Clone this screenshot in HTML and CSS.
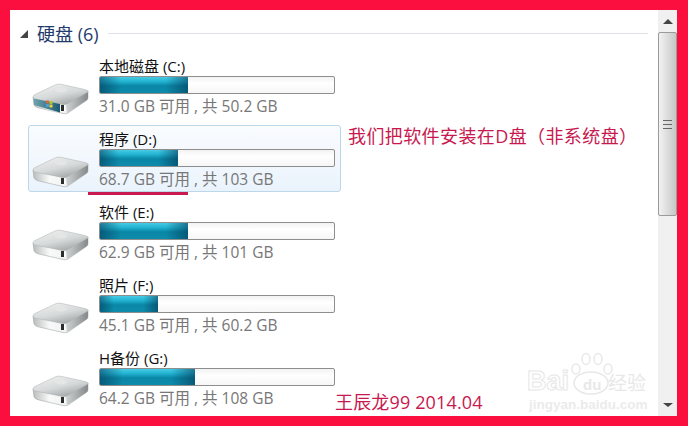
FILE: index.html
```html
<!DOCTYPE html>
<html lang="zh-CN">
<head>
  <meta charset="UTF-8" />
  <title>硬盘</title>
  <link rel="stylesheet" href="styles.css">
</head>
<body>
  <svg class="defs" width="0" height="0">
    <defs>
      <linearGradient id="top" x1="0" y1="0" x2="0.6" y2="1">
        <stop offset="0" stop-color="#f3f4f4"/>
        <stop offset="0.6" stop-color="#d6d9d9"/>
        <stop offset="1" stop-color="#a6aaaa"/>
      </linearGradient>
      <linearGradient id="front" x1="0" y1="0" x2="1" y2="0">
        <stop offset="0" stop-color="#b9bcbc"/>
        <stop offset="0.3" stop-color="#f8f9f9"/>
        <stop offset="1" stop-color="#e6e8e8"/>
      </linearGradient>
      <linearGradient id="flank" x1="0" y1="0" x2="1" y2="0">
        <stop offset="0" stop-color="#cfd2d2"/>
        <stop offset="1" stop-color="#858989"/>
      </linearGradient>
      <linearGradient id="glass" x1="0" y1="0" x2="1" y2="0">
        <stop offset="0" stop-color="#6fa3ad"/>
        <stop offset="1" stop-color="#1c5b76"/>
      </linearGradient>
      <symbol id="drive" viewBox="0 0 58 34">
        <path d="M2 23 Q3 25 6 25.800 L31 31.500 Q34 32.300 36 31 L55 18 Q56 17 56 15 L56 9 L33 23 L1 15 Z" fill="url(#front)" stroke="#999d9d" stroke-width="0.500" stroke-linejoin="round"/>
        <path d="M35 31.500 L55 18 Q56 17 56 15 L56 9 L34 23 Z" fill="url(#flank)"/>
        <path d="M1 15 Q1 13 4 12 L23 3 Q26 1.500 29 2.300 L53 7.500 Q57 8.500 56 10 L36 21.500 Q33 23 30 22.300 L3 17 Q1 16.500 1 15 Z" fill="url(#top)" stroke="#adb1b1" stroke-width="0.500"/>
        <ellipse cx="29" cy="8" rx="6" ry="2.500" fill="#e4e6e6"/>
        <rect x="29" y="23" width="3" height="6" fill="#2c2c2c"/>
        <rect x="32" y="23" width="1.500" height="6" fill="#fff"/>
      </symbol>
      <symbol id="drive-sys" viewBox="0 0 58 34">
        <use href="#drive"/>
        <path d="M1.500 16.500 L2 23 L28 30.500 L28 22 Z" fill="url(#glass)"/>
        <rect x="14" y="18.500" width="3" height="3" fill="#d86a3a"/>
        <rect x="17.500" y="19" width="3" height="3" fill="#a6c83c"/>
        <rect x="14" y="22" width="3" height="3" fill="#4d9fd8"/>
        <rect x="17.500" y="22.500" width="3" height="3" fill="#f0cd32"/>
      </symbol>
    </defs>
  </svg>

  <div class="frame">
    <div class="pane">
      <div class="group-head">
        <span class="arrow"></span>
        <span class="group-title">硬盘 (6)</span>
        <span class="group-line"></span>
      </div>

      <div class="drive">
        <svg class="drive-icon"><use href="#drive-sys"/></svg>
        <div class="drive-info">
          <div class="drive-name">本地磁盘 (C:)</div>
          <div class="bar"><div class="bar-fill" style="width:89px"></div></div>
          <div class="drive-size">31.0 GB 可用 , 共 50.2 GB</div>
        </div>
      </div>

      <div class="drive selected">
        <svg class="drive-icon"><use href="#drive"/></svg>
        <div class="drive-info">
          <div class="drive-name">程序 (D:)</div>
          <div class="bar"><div class="bar-fill" style="width:79px"></div></div>
          <div class="drive-size">68.7 GB 可用 , 共 103 GB</div>
        </div>
        <span class="underline"></span>
        <span class="note">我们把软件安装在D盘（非系统盘）</span>
      </div>

      <div class="drive">
        <svg class="drive-icon"><use href="#drive"/></svg>
        <div class="drive-info">
          <div class="drive-name">软件 (E:)</div>
          <div class="bar"><div class="bar-fill" style="width:89px"></div></div>
          <div class="drive-size">62.9 GB 可用 , 共 101 GB</div>
        </div>
      </div>

      <div class="drive">
        <svg class="drive-icon"><use href="#drive"/></svg>
        <div class="drive-info">
          <div class="drive-name">照片 (F:)</div>
          <div class="bar"><div class="bar-fill" style="width:59px"></div></div>
          <div class="drive-size">45.1 GB 可用 , 共 60.2 GB</div>
        </div>
      </div>

      <div class="drive">
        <svg class="drive-icon"><use href="#drive"/></svg>
        <div class="drive-info">
          <div class="drive-name">H备份 (G:)</div>
          <div class="bar"><div class="bar-fill" style="width:96px"></div></div>
          <div class="drive-size">64.2 GB 可用 , 共 108 GB</div>
        </div>
      </div>

      <span class="signature">王辰龙99 2014.04</span>

      <div class="watermark">
        <svg class="paw" width="46" height="44" viewBox="0 0 46 44">
          <g fill="none" stroke="#e8e8e8" stroke-width="1.500">
            <ellipse cx="7" cy="17" rx="4" ry="5"/>
            <ellipse cx="17" cy="7" rx="4" ry="5.500"/>
            <ellipse cx="29" cy="7" rx="4" ry="5.500"/>
            <ellipse cx="39" cy="17" rx="4" ry="5"/>
            <ellipse cx="22" cy="31" rx="17" ry="11"/>
          </g>
        </svg>
        <span class="wm-bai">Bai</span>
        <span class="wm-du">du</span>
        <span class="wm-jy">经验</span>
        <span class="wm-url">jingyan.baidu.com</span>
      </div>
    </div>

    <div class="scrollbar">
      <div class="scroll-btn"><span class="tri-up"></span></div>
      <div class="thumb">
        <span class="grip"></span>
      </div>
      <div class="scroll-track"></div>
      <div class="scroll-btn"><span class="tri-down"></span></div>
    </div>
  </div>
</body>
</html>
```

FILE: styles.css
```css
* {
  box-sizing: border-box;
}

html, body {
  height: 100%;
}

body {
  margin: 0;
  background: #fa0f3f;
  font-family: "Open Sans", "Noto Sans CJK SC", sans-serif;
  overflow: hidden;
}

.defs {
  position: absolute;
}

.frame {
  display: flex;
  width: 667px;
  height: 406px;
  margin: 10px 0 0 10px;
  background: #fff;
}

.pane {
  position: relative;
  flex: 1;
  overflow: hidden;
  padding: 10px 0 0 10px;
}

/* group header */
.group-head {
  display: flex;
  align-items: center;
  gap: 9px;
  height: 26px;
  margin-bottom: 6px;
  padding-right: 10px;
}

.arrow {
  width: 0;
  height: 0;
  margin-top: 1px;
  border-left: 8px solid transparent;
  border-bottom: 8px solid #444;
}

.group-title {
  font-size: 18px;
  color: #1f3a6d;
}

.group-line {
  flex: 1;
  height: 1px;
  background: #dfe3e8;
}

/* drive rows */
.drive {
  position: relative;
  display: flex;
  width: 313px;
  height: 67px;
  margin: 0 0 6px 8px;
  padding: 0 0 0 3px;
  border: 1px solid transparent;
  border-radius: 3px;
}

.drive.selected {
  border-color: #bcd6ea;
  background: linear-gradient(#fafcfe, #eaf3fc);
}

.drive-icon {
  flex: none;
  width: 58px;
  height: 34px;
  margin-top: 29px;
}

.drive-info {
  margin-left: 9px;
  padding-top: 3px;
}

.drive-name {
  height: 20px;
  font-size: 15px;
  line-height: 20px;
  color: #111;
  white-space: nowrap;
}

.bar {
  width: 236px;
  height: 18px;
  border: 1px solid #8e8e8e;
  border-radius: 2px;
  background: linear-gradient(#f2f2f2, #fff 40%, #f6f6f6);
  overflow: hidden;
}

.bar-fill {
  height: 100%;
  margin: -1px 0 0 -1px;
  box-sizing: content-box;
  padding-bottom: 2px;
  background:
    linear-gradient(to right, rgba(3, 50, 80, 0.55), rgba(3, 50, 80, 0) 25%, rgba(3, 50, 80, 0) 75%, rgba(3, 50, 80, 0.55)),
    linear-gradient(#4fd0e8, #22b4d2 30%, #0a86a6 55%, #0f8cab 100%);
}

.drive-size {
  margin-top: 2px;
  font-size: 15.500px;
  line-height: 21px;
  color: #777;
  white-space: nowrap;
}

/* red annotations */
.underline {
  position: absolute;
  left: 59px;
  bottom: -4px;
  width: 100px;
  height: 3px;
  background: #c81a50;
}

.note {
  position: absolute;
  left: 319px;
  top: -1px;
  font-size: 18px;
  line-height: 23px;
  letter-spacing: 0.400px;
  color: #c8194f;
  white-space: nowrap;
}

.signature {
  position: absolute;
  left: 325px;
  top: 381px;
  font-size: 18px;
  line-height: 22px;
  letter-spacing: 0.150px;
  color: #c8194f;
  white-space: nowrap;
}

/* baidu watermark */
.watermark {
  position: absolute;
  left: 517px;
  top: 342px;
  width: 125px;
  height: 64px;
  color: transparent;
}

.paw {
  position: absolute;
  left: 42px;
  top: 0;
}

.wm-bai {
  position: absolute;
  left: 0;
  top: 14px;
  font: bold 27px "Liberation Sans", sans-serif;
  -webkit-text-stroke: 1px #e6e6e6;
}

.wm-du {
  position: absolute;
  left: 56px;
  top: 24px;
  font: bold 15px "Liberation Sans", sans-serif;
  color: #e8e8e8;
}

.wm-jy {
  position: absolute;
  left: 81px;
  top: 16px;
  font: 19px "Noto Sans CJK SC", sans-serif;
  color: #e8e8e8;
}

.wm-url {
  position: absolute;
  left: 2px;
  top: 45px;
  font: bold 13.500px "Liberation Sans", sans-serif;
  color: #ebebeb;
  white-space: nowrap;
}

/* scrollbar */
.scrollbar {
  display: flex;
  flex-direction: column;
  flex: none;
  width: 19px;
  background: #f0f0f0;
}

.scroll-btn {
  display: flex;
  align-items: center;
  justify-content: center;
  height: 22px;
}

.tri-up {
  border: 5px solid transparent;
  border-top: 0;
  border-bottom: 5px solid #444;
}

.tri-down {
  border: 5px solid transparent;
  border-bottom: 0;
  border-top: 4px solid #444;
}

.thumb {
  display: flex;
  align-items: center;
  justify-content: center;
  height: 184px;
  border: 1px solid #9a9a9a;
  border-radius: 2px;
  background: linear-gradient(to right, #f2f2f2, #dcdcdc 50%, #c6c8c8);
}

.grip {
  width: 9px;
  height: 9px;
  border-top: 1px solid #666;
  border-bottom: 1px solid #666;
  background: linear-gradient(#666, #666) center / 100% 1px no-repeat;
}

.scroll-track {
  flex: 1;
}
```
